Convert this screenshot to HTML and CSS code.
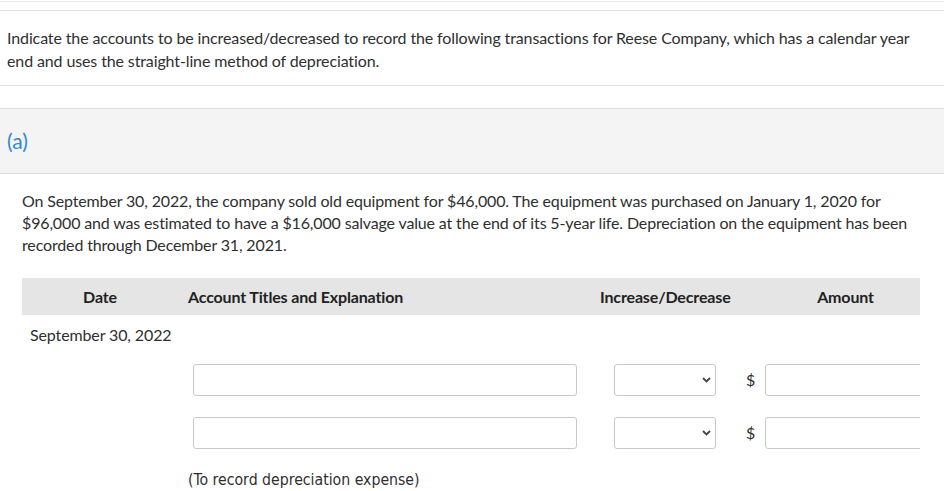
FILE: index.html
```html
<!DOCTYPE html>
<html>
<head>
<meta charset="utf-8">
<link rel="stylesheet" href="styles.css">
</head>
<body>
<div class="page">
  <div class="rule-top"></div>
  <div class="question">
    <p>Indicate the accounts to be increased/decreased to record the following transactions for Reese Company, which has a calendar year end and uses the straight-line method of depreciation.</p>
  </div>
  <div class="part-head">
    <span class="part-label">(a)</span>
  </div>
  <div class="part-body">
    <p class="scenario">On September 30, 2022, the company sold old equipment for $46,000. The equipment was purchased on January 1, 2020 for $96,000 and was estimated to have a $16,000 salvage value at the end of its 5-year life. Depreciation on the equipment has been recorded through December 31, 2021.</p>
    <div class="journal">
      <div class="row head">
        <div class="c-date">Date</div>
        <div class="c-acct">Account Titles and Explanation</div>
        <div class="c-inc">Increase/Decrease</div>
        <div class="c-cur"></div>
        <div class="c-amt">Amount</div>
      </div>
      <div class="row date-row">
        <div class="c-date">September 30, 2022</div>
      </div>
      <div class="row entry">
        <div class="c-date"></div>
        <div class="c-acct"><input class="field acct-field" type="text"></div>
        <div class="c-inc">
          <div class="select-wrap">
            <select class="field sel"><option></option></select>
            <svg class="chev" width="9" height="6" viewBox="0 0 9 6"><path d="M1 1 L4.5 4.5 L8 1" fill="none" stroke="#444" stroke-width="1.8"/></svg>
          </div>
        </div>
        <div class="c-cur">$</div>
        <div class="c-amt"><input class="field amt-field" type="text"></div>
      </div>
      <div class="row entry second">
        <div class="c-date"></div>
        <div class="c-acct"><input class="field acct-field" type="text"></div>
        <div class="c-inc">
          <div class="select-wrap">
            <select class="field sel"><option></option></select>
            <svg class="chev" width="9" height="6" viewBox="0 0 9 6"><path d="M1 1 L4.5 4.5 L8 1" fill="none" stroke="#444" stroke-width="1.8"/></svg>
          </div>
        </div>
        <div class="c-cur">$</div>
        <div class="c-amt"><input class="field amt-field" type="text"></div>
      </div>
      <div class="row caption-row">
        <div class="c-date"></div>
        <div class="c-acct caption">(To record depreciation expense)</div>
      </div>
    </div>
  </div>
</div>
</body>
</html>
```
FILE: styles.css
```css
html, body {
  margin: 0;
  padding: 0;
  background: #fff;
}
body {
  font-family: Lato, "Liberation Sans", sans-serif;
  font-size: 16px;
  color: #2f2f2f;
  overflow: hidden;
  height: 491px;
  letter-spacing: -0.12px;
}
p { margin: 0; }
.page {
  padding-top: 1px;
}
.rule-top {
  border-top: 1px solid #ececec;
  height: 8px;
}
.question {
  border-top: 1px solid #dedede;
  border-bottom: 1px solid #dedede;
  padding: 15px 8px 13px 7px;
  line-height: 23px;
}
.part-head {
  margin-top: 22px;
  background: #f4f4f4;
  border-top: 1px solid #dcdcdc;
  border-bottom: 1px solid #dcdcdc;
  height: 64px;
  display: flex;
  align-items: center;
  padding-left: 7px;
}
.part-label {
  color: #2b8ad8;
  font-size: 21px;
  line-height: 24px;
  letter-spacing: 0;
}
.part-body {
  padding: 16px 24px 0 22px;
}
.scenario {
  line-height: 22px;
  letter-spacing: -0.15px;
}
.journal {
  margin-top: 22px;
  width: 898px;
  overflow: hidden;
}
.row {
  display: grid;
  grid-template-columns: 156px 422px 130px 35px 155px;
  align-items: center;
}
.row.head {
  background: #e5e5e5;
  height: 37px;
  font-weight: bold;
  color: #222;
  letter-spacing: -0.15px;
}
.head .c-date { text-align: center; }
.head .c-acct { padding-left: 10px; }
.head .c-inc { text-align: center; padding-right: 2px; }
.head .c-amt { text-align: center; padding-left: 6px; }
.date-row {
  padding-top: 9px;
  line-height: 22px;
}
.date-row .c-date {
  padding-left: 8px;
  white-space: nowrap;
}
.entry {
  margin-top: 18px;
  height: 32px;
}
.entry.second {
  margin-top: 21px;
}
.field {
  box-sizing: border-box;
  height: 32px;
  border: 1px solid #c9c9c9;
  border-radius: 3px;
  background: #fff;
  margin: 0;
  padding: 0 8px;
  font: inherit;
  outline: none;
}
.acct-field {
  width: 384px;
  margin-left: 15px;
  display: block;
}
.select-wrap {
  position: relative;
  width: 102px;
  margin-left: 14px;
}
.sel {
  width: 102px;
  appearance: none;
  -webkit-appearance: none;
  display: block;
}
.chev {
  position: absolute;
  right: 5px;
  top: 13px;
}
.c-cur {
  text-align: left;
  padding-left: 16px;
  line-height: 32px;
}
.amt-field {
  width: 200px;
  display: block;
}
.caption-row {
  margin-top: 20px;
  line-height: 22px;
}
.caption {
  font-family: "DejaVu Sans Condensed", "DejaVu Sans", sans-serif;
  font-size: 15.7px;
  letter-spacing: 0;
  padding-left: 10px;
  white-space: nowrap;
}
```
